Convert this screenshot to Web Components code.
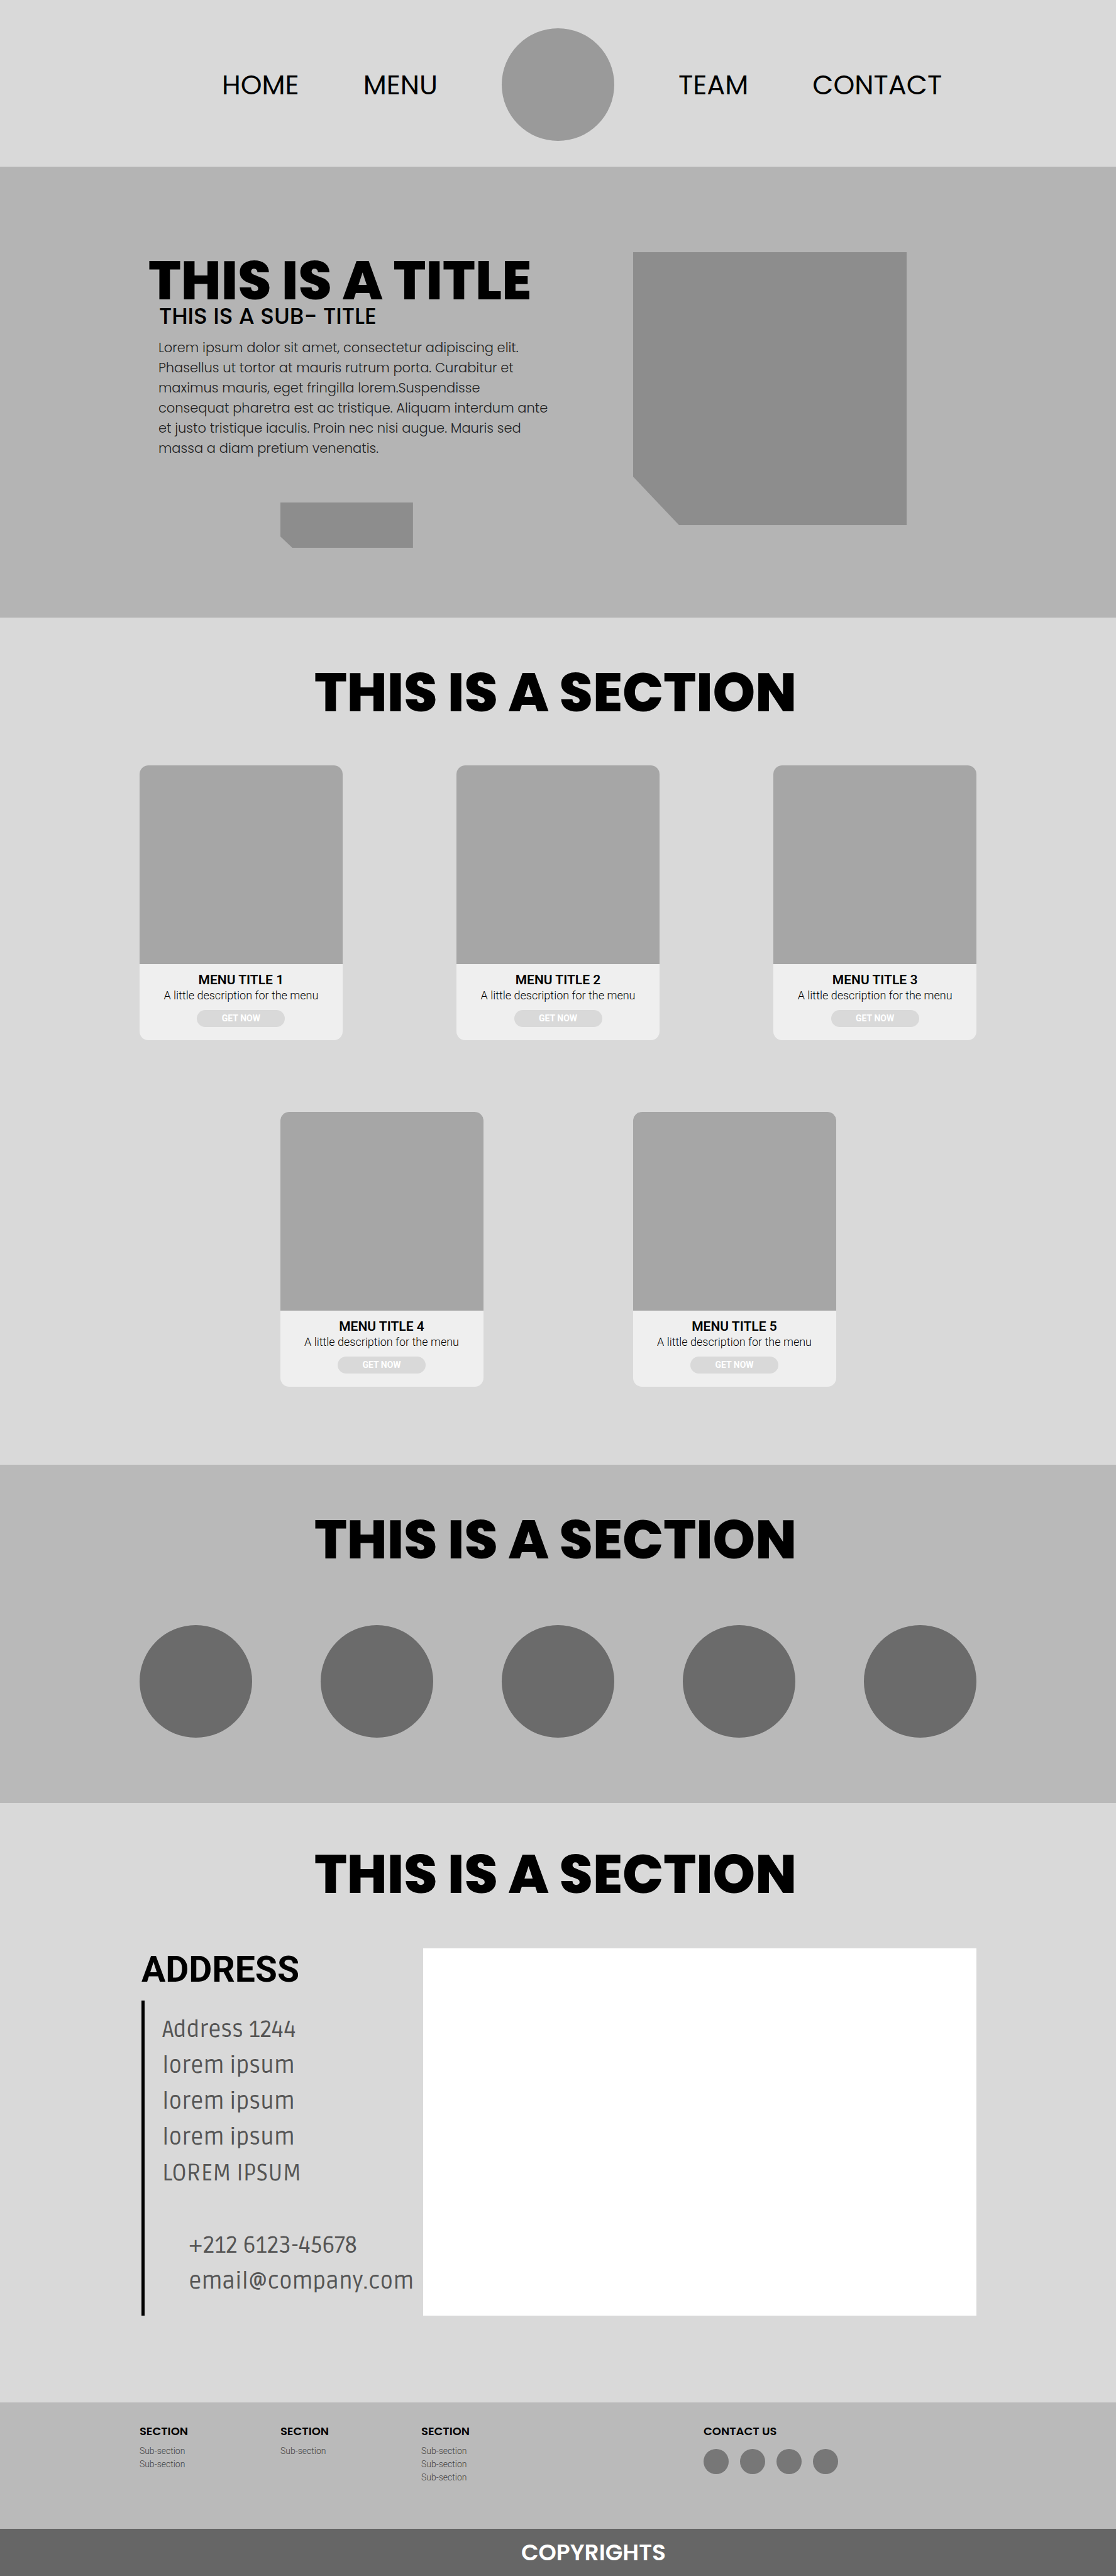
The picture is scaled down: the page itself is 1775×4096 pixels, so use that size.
<!DOCTYPE html>
<html lang="en">
<head>
<meta charset="utf-8">
<meta name="viewport" content="width=device-width, initial-scale=1">
<title>Landing page</title>
<style>
  html, body { margin: 0; }
  body {
    --display: Poppins, "Open Sans", sans-serif;
    --body: Roboto, "Liberation Sans", sans-serif;
    --gutter: 12.5%;
    background: #d9d9d9;
    color: #000;
    font-family: var(--body);
  }
</style>
</head>
<body>

<site-header>
  <a slot="left" href="#home">HOME</a>
  <a slot="left" href="#menu">MENU</a>
  <a slot="right" href="#team">TEAM</a>
  <a slot="right" href="#contact">CONTACT</a>
</site-header>

<main>
  <hero-banner id="home">
    <span slot="title">THIS IS A TITLE</span>
    <span slot="subtitle">THIS IS A SUB- TITLE</span>
    Lorem ipsum dolor sit amet, consectetur adipiscing elit.<br>
    Phasellus ut tortor at mauris rutrum porta. Curabitur et<br>
    maximus mauris, eget fringilla lorem.Suspendisse<br>
    consequat pharetra est ac tristique. Aliquam interdum ante<br>
    et justo tristique iaculis. Proin nec nisi augue. Mauris sed<br>
    massa a diam pretium venenatis.
  </hero-banner>

  <page-section id="menu">
    <span slot="title">THIS IS A SECTION</span>
    <card-row>
      <menu-card>MENU TITLE 1</menu-card>
      <menu-card>MENU TITLE 2</menu-card>
      <menu-card>MENU TITLE 3</menu-card>
    </card-row>
    <card-row centered>
      <menu-card>MENU TITLE 4</menu-card>
      <menu-card>MENU TITLE 5</menu-card>
    </card-row>
  </page-section>

  <page-section id="team" tone="dark">
    <span slot="title">THIS IS A SECTION</span>
    <team-row></team-row>
  </page-section>

  <page-section id="contact" tone="contact">
    <span slot="title">THIS IS A SECTION</span>
    <contact-panel></contact-panel>
  </page-section>
</main>

<site-footer>
  <footer-column heading="SECTION">
    <a href="#">Sub-section</a><a href="#">Sub-section</a>
  </footer-column>
  <footer-column heading="SECTION">
    <a href="#">Sub-section</a>
  </footer-column>
  <footer-column heading="SECTION">
    <a href="#">Sub-section</a><a href="#">Sub-section</a><a href="#">Sub-section</a>
  </footer-column>
  <footer-column heading="CONTACT US">
    <social-dots></social-dots>
  </footer-column>
</site-footer>

<script>
const define = (name, html) => {
  const template = document.createElement('template');
  template.innerHTML = html;
  customElements.define(name, class extends HTMLElement {
    constructor() {
      super();
      this.attachShadow({ mode: 'open' }).append(template.content.cloneNode(true));
    }
    connectedCallback() {
      const heading = this.shadowRoot.querySelector('[data-heading]');
      if (heading) heading.textContent = this.getAttribute('heading');
    }
  });
};

define('site-header', `
<style>
  :host { display: block; }
  nav {
    display: grid; grid-template-columns: 1fr auto 1fr; gap: 102px;
    align-items: center; padding: 45px 0 41px;
    font: 400 43px/60px var(--display);
  }
  .group { display: flex; gap: 102px; }
  .start { justify-content: flex-end; }
  .logo { width: 179px; aspect-ratio: 1; border-radius: 50%; background: #9a9a9a; }
  ::slotted(a) { color: inherit; text-decoration: none; }
</style>
<header><nav>
  <div class="group start"><slot name="left"></slot></div>
  <div class="logo"></div>
  <div class="group"><slot name="right"></slot></div>
</nav></header>`);

define('hero-banner', `
<style>
  :host { display: block; background: #b4b4b4; }
  .hero {
    display: grid; grid-template-columns: 785fr 546fr; align-items: start;
    padding: 136px var(--gutter) 111px;
  }
  .copy { padding: 5px 0 0 14px; }
  h1 { margin: 0; font: 800 86px/80px var(--display); }
  h2 { margin: 0 0 17px 17px; font: 500 36px/34px var(--display); }
  p { margin: 0 0 70px 16px; color: #222; font: 300 21px/32px var(--display); white-space: nowrap; }
  button {
    display: block; width: 211px; height: 72px; margin-left: 210px; padding: 0; border: 0;
    background: #8d8d8d;
    clip-path: polygon(0 0, 100% 0, 100% 100%, 19px 100%, 0 54px);
  }
  .picture {
    width: 435px; height: 434px; background: #8d8d8d;
    clip-path: polygon(0 0, 100% 0, 100% 100%, 73px 100%, 0 357px);
  }
</style>
<section class="hero">
  <div class="copy">
    <h1><slot name="title"></slot></h1>
    <h2><slot name="subtitle"></slot></h2>
    <p><slot></slot></p>
    <button type="button"></button>
  </div>
  <div class="picture"></div>
</section>`);

define('page-section', `
<style>
  :host { display: block; --top: 76px; --gap: 73px; --bottom: 124px; }
  :host([tone="dark"]) { background: #b9b9b9; --gap: 93px; --bottom: 104px; }
  :host([tone="contact"]) { --top: 70px; --gap: 75px; --bottom: 138px; }
  section { padding: var(--top) var(--gutter) var(--bottom); }
  h2 {
    margin: 0 0 var(--gap); padding-right: 8px; text-align: center;
    font: 800 86px/86px var(--display);
  }
  .content { display: flex; flex-direction: column; gap: 114px; }
</style>
<section>
  <h2><slot name="title"></slot></h2>
  <div class="content"><slot></slot></div>
</section>`);

define('card-row', `
<style>
  :host { display: flex; justify-content: space-between; }
  :host([centered]) { justify-content: center; gap: 238px; }
</style>
<slot></slot>`);

define('menu-card', `
<style>
  :host { display: block; width: 323px; }
  article { border-radius: 14px; overflow: hidden; background: #efefef; text-align: center; }
  .picture { height: 316px; background: #a6a6a6; }
  .body { padding: 13px 0 21px; }
  h3 { margin: 0; font: 600 21px/25px var(--body); }
  p { margin: 0 0 11px; font: 300 18px/24px var(--body); }
  button {
    display: block; width: 140px; height: 27px; margin: 0 auto; padding: 0;
    border: 0; border-radius: 14px; background: #d9d9d9; color: #fff;
    font: 700 14px/27px var(--body);
  }
</style>
<article>
  <div class="picture"></div>
  <div class="body">
    <h3><slot></slot></h3>
    <p>A little description for the menu</p>
    <button type="button">GET NOW</button>
  </div>
</article>`);

define('team-row', `
<style>
  :host { display: flex; justify-content: space-between; }
  div { width: 179px; aspect-ratio: 1; border-radius: 50%; background: #6b6b6b; }
</style>
<div></div><div></div><div></div><div></div><div></div>`);

define('contact-panel', `
<style>
  :host { display: grid; grid-template-columns: 451fr 880fr; min-height: 584px; }
  .info { display: flex; flex-direction: column; padding: 5px 0 0 3px; }
  h3 { margin: 0 0 21px; font: 700 57px/57px var(--body); }
  address {
    flex: 1; padding: 19px 0 0 28px; border-left: 5px solid #000; color: #555;
    font: 400 36px/57px Ruda, "Noto Sans", sans-serif; white-space: nowrap;
  }
  .direct { display: flex; flex-direction: column; margin: 58px 0 0 42px; }
  a { color: inherit; text-decoration: none; }
  .map { background: #fff; }
</style>
<div class="info">
  <h3>ADDRESS</h3>
  <address>
    Address 1244<br>lorem ipsum<br>lorem ipsum<br>lorem ipsum<br>LOREM IPSUM
    <div class="direct">
      <a href="tel:+212612345678">+212 6123-45678</a>
      <a href="mailto:email@company.com">email@company.com</a>
    </div>
  </address>
</div>
<div class="map"></div>`);

define('footer-column', `
<style>
  :host { display: block; }
  h4 { margin: 0 0 9px; font: 600 18px/24px var(--display); }
  .links { display: flex; flex-direction: column; align-items: flex-start; font: 300 14px/21px var(--body); }
  ::slotted(a) { color: #444; text-decoration: none; }
</style>
<h4 data-heading></h4>
<div class="links"><slot></slot></div>`);

define('social-dots', `
<style>
  :host { display: flex; gap: 18px; padding-top: 7px; }
  a { width: 40px; height: 40px; border-radius: 50%; background: #777; }
</style>
<a href="#"></a><a href="#"></a><a href="#"></a><a href="#"></a>`);

define('site-footer', `
<style>
  :host { display: block; }
  .columns {
    display: grid; grid-template-columns: 224fr 224fr 449fr 434fr;
    min-height: 167px; padding: 34px var(--gutter) 0; background: #bababa;
  }
  .copyright {
    padding: 20px 0 19px 46.7%; background: #666; color: #fff;
    font: 600 36px/36px var(--display);
  }
</style>
<footer>
  <div class="columns"><slot></slot></div>
  <div class="copyright">COPYRIGHTS</div>
</footer>`);
</script>
</body>
</html>
